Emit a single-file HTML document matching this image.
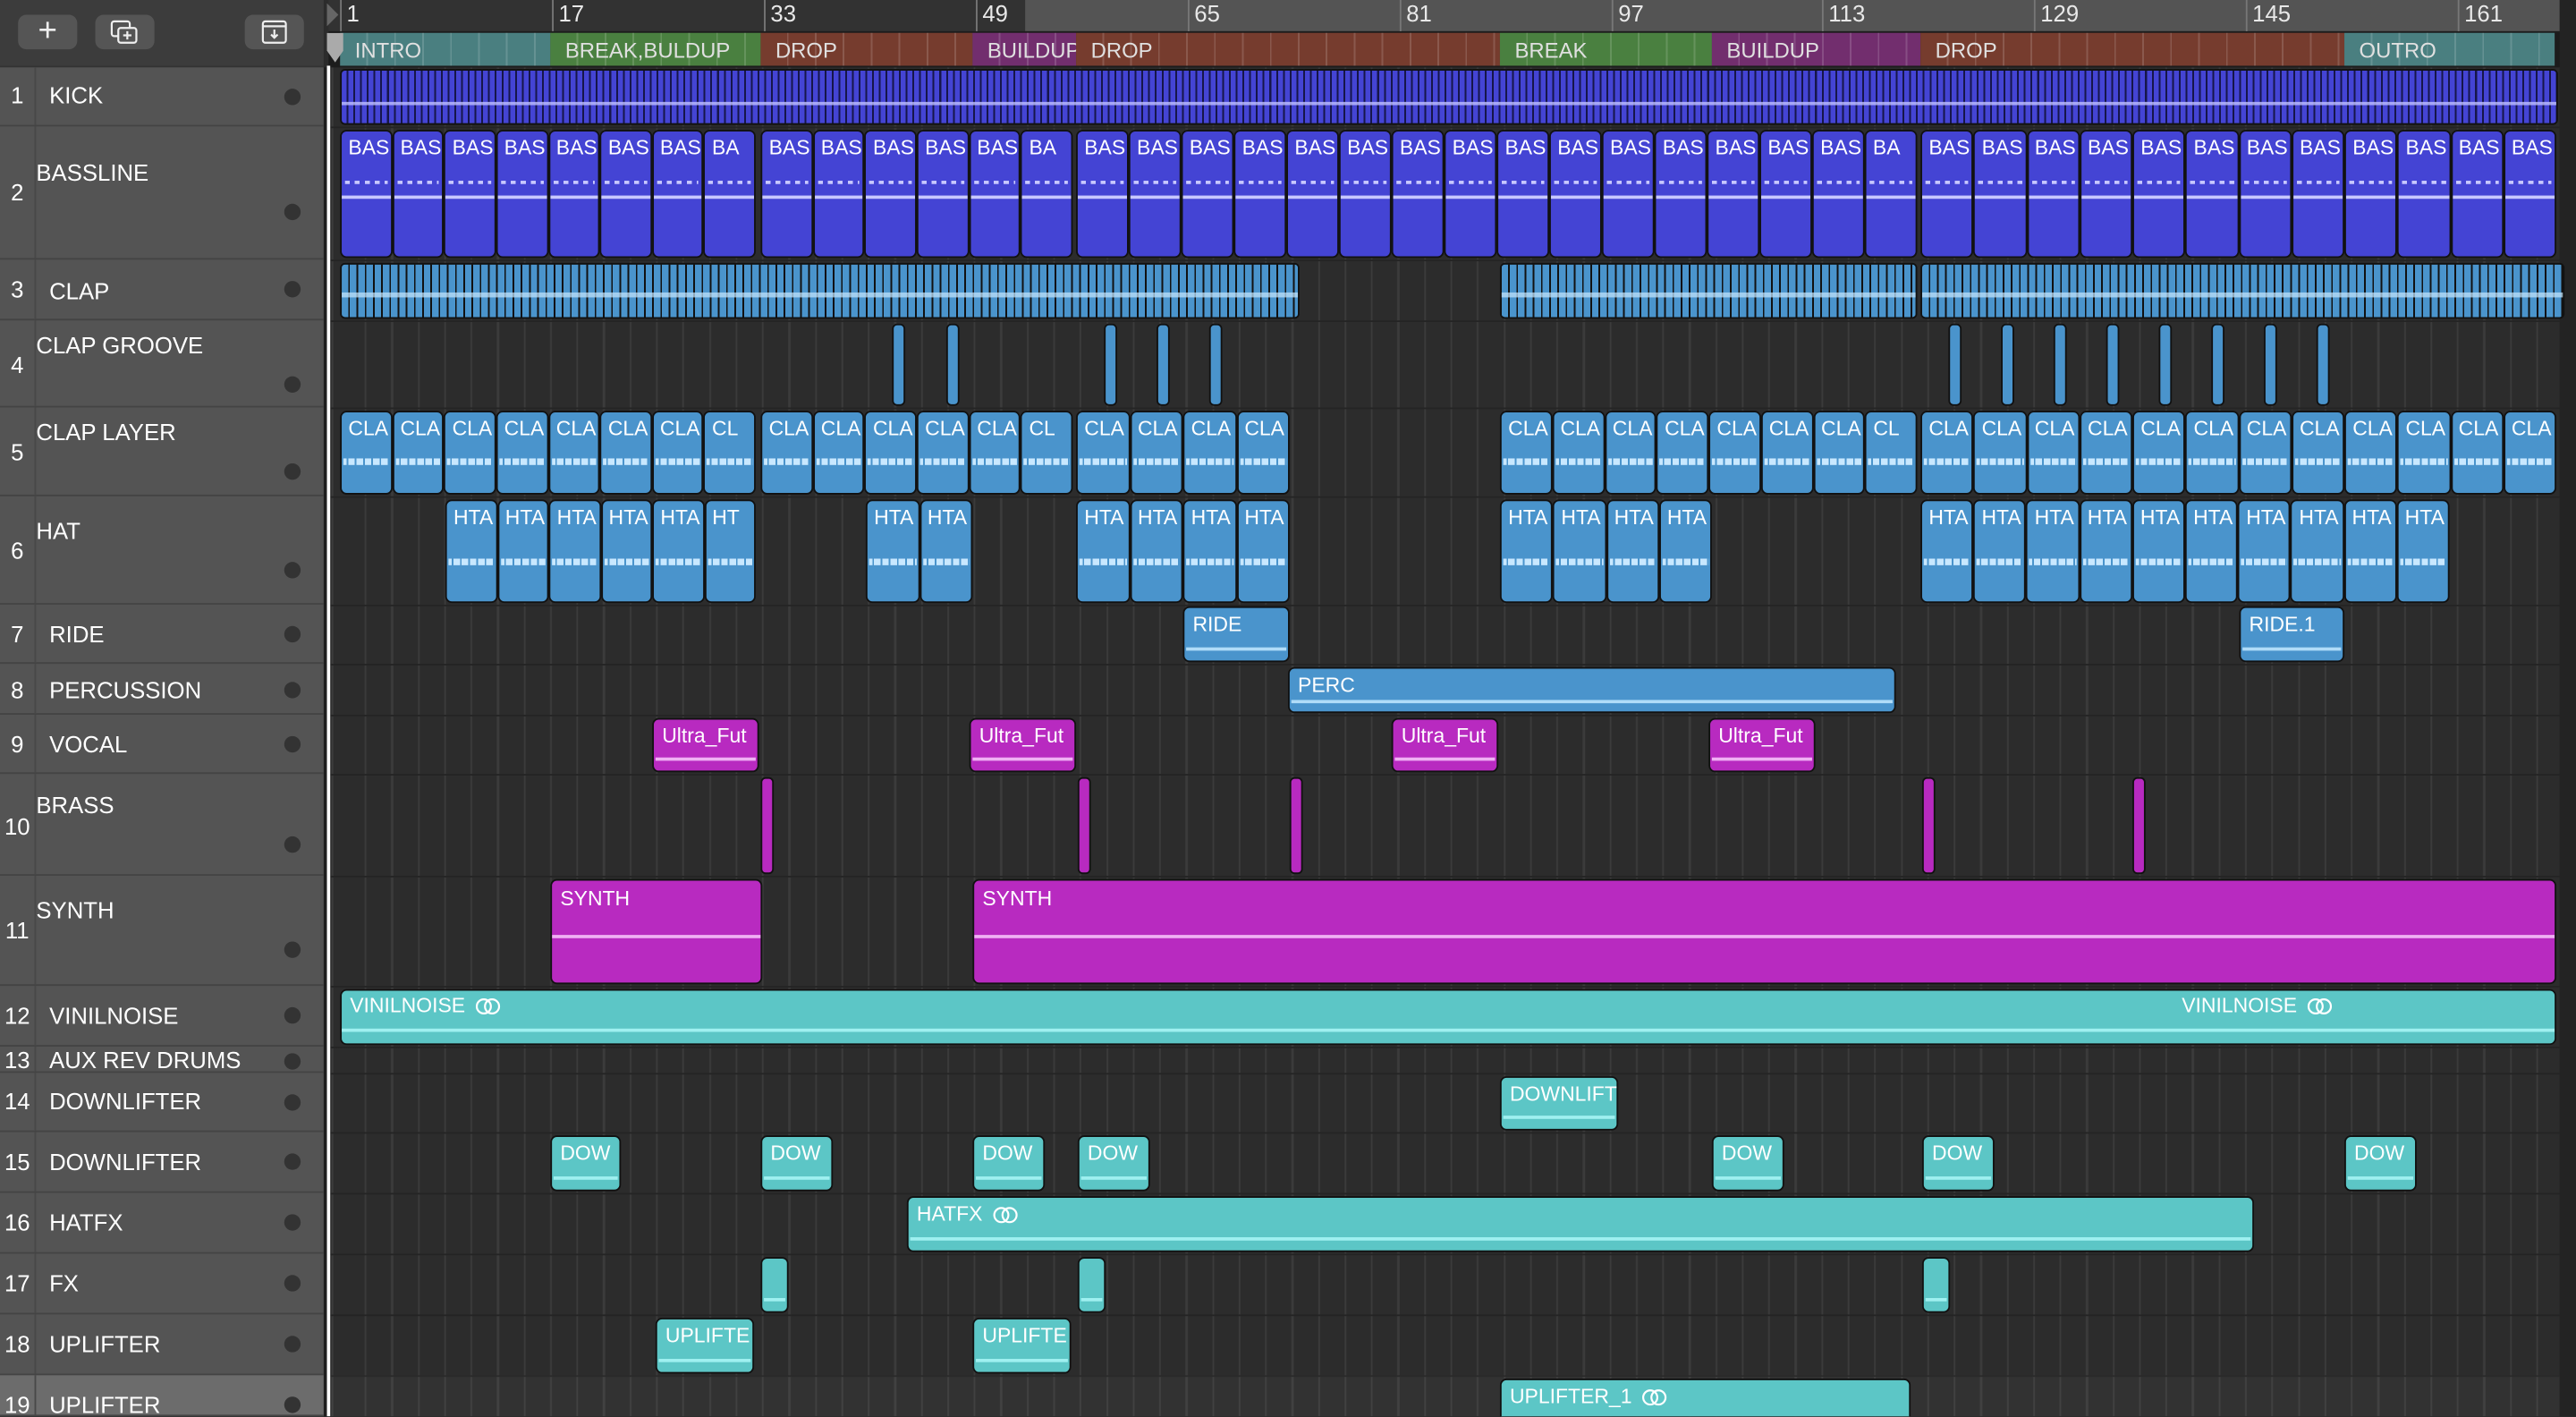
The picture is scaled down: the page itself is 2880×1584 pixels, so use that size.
<!DOCTYPE html>
<html><head><meta charset="utf-8"><style>
*{margin:0;padding:0;box-sizing:border-box}
html,body{width:2880px;height:1584px;overflow:hidden;background:#2c2c2c}
#w{position:absolute;left:0;top:0;width:1568px;height:862px;transform:scale(1.83674);transform-origin:0 0;font-family:"Liberation Sans",sans-serif;overflow:hidden}
.a{position:absolute}
.hd{position:absolute;left:0;width:197px;background:#545454;border-bottom:1px solid #444;color:#fff;font-size:14px}
.hd .n{position:absolute;left:0;width:22px;text-align:center;border-right:1px solid #484848;height:100%}
.hd .dot{position:absolute;left:173px;width:10px;height:10px;border-radius:50%;background:#333}
.r{position:absolute;border:1.2px solid #111;border-radius:4px;color:#fff;font-size:12.5px;padding:3px 0 0 5px;overflow:hidden;white-space:nowrap}
.f{position:absolute;display:flex}
.f>div{position:relative;flex:1;border:1.2px solid #111;border-radius:4px;color:#fff;font-size:12.5px;padding:3px 0 0 4px;overflow:hidden;white-space:nowrap}
.p{background:#4444d4}.b{background:#4a94cc}.m{background:#b82ac0}.t{background:#5cc6c6}
.ln::after{content:"";position:absolute;left:1px;right:1px;bottom:20%;height:2px;background:#9ff0f0}
.b.ln::after{background:#b0dcf8}.m.ln::after{background:#f0b0f4}
.bas::after{content:"";position:absolute;left:2px;right:2px;top:30px;height:2px;background:repeating-linear-gradient(90deg,#c8c8ff 0 3px,transparent 3px 6px)}
.bas::before{content:"";position:absolute;left:0;right:0;top:39px;height:2px;background:#c8c8ff}
.wv::after{content:"";position:absolute;left:1px;right:1px;top:58%;height:4px;background:repeating-linear-gradient(90deg,#c8e8ff 0 2px,#4a94cc 2px 3px,#c8e8ff 3px 5px)}
.mk{position:absolute;top:20px;height:20px;color:#e0e0e0;font-size:13px;padding:3px 0 0 9px;background-image:repeating-linear-gradient(90deg,transparent 0 16px,rgba(255,255,255,.15) 16px 17px)}
.rl{position:absolute;top:0;color:#e8e8e8;font-size:14px;border-left:1px solid #777;height:19px;padding-left:3px;line-height:16px}
.th{position:absolute;width:8px;border:1.2px solid #111;border-radius:3px}
.btn{position:absolute;top:9px;height:21px;width:36px;border-radius:5px;background:#555;color:#eee;text-align:center}
.lk{display:inline-block;vertical-align:-2px;margin-left:6px}
</style></head><body><div id="w">
<div class="a" style="left:200px;top:41px;width:1358px;height:821px;background:#2c2c2c;background-image:repeating-linear-gradient(90deg,transparent 0 15px,#3b3b3b 15px 16.12px);background-position:7px 0"></div>
<div class="a" style="left:1558px;top:0;width:10px;height:862px;background:#232323"></div>
<div class="a" style="left:200px;top:0;width:1358px;height:862px;background:
linear-gradient(#242424,#242424) 0 76.5px/100% 1.2px no-repeat,
linear-gradient(#242424,#242424) 0 157.5px/100% 1.2px no-repeat,
linear-gradient(#242424,#242424) 0 194.5px/100% 1.2px no-repeat,
linear-gradient(#242424,#242424) 0 247.5px/100% 1.2px no-repeat,
linear-gradient(#242424,#242424) 0 301.5px/100% 1.2px no-repeat,
linear-gradient(#242424,#242424) 0 367.5px/100% 1.2px no-repeat,
linear-gradient(#242424,#242424) 0 403.5px/100% 1.2px no-repeat,
linear-gradient(#242424,#242424) 0 434.5px/100% 1.2px no-repeat,
linear-gradient(#242424,#242424) 0 470.5px/100% 1.2px no-repeat,
linear-gradient(#242424,#242424) 0 532.5px/100% 1.2px no-repeat,
linear-gradient(#242424,#242424) 0 599.5px/100% 1.2px no-repeat,
linear-gradient(#242424,#242424) 0 636.5px/100% 1.2px no-repeat,
linear-gradient(#242424,#242424) 0 652.5px/100% 1.2px no-repeat,
linear-gradient(#242424,#242424) 0 688.5px/100% 1.2px no-repeat,
linear-gradient(#242424,#242424) 0 725.5px/100% 1.2px no-repeat,
linear-gradient(#242424,#242424) 0 762.5px/100% 1.2px no-repeat,
linear-gradient(#242424,#242424) 0 799.5px/100% 1.2px no-repeat,
linear-gradient(#242424,#242424) 0 836.5px/100% 1.2px no-repeat"></div>
<div class="a" style="left:200px;top:837px;width:1358px;height:25px;background:rgba(255,255,255,.03)"></div>

<div class="a" style="left:200px;top:0;width:424px;height:19px;background:#323232"></div>
<div class="a" style="left:624px;top:0;width:934px;height:19px;background:#545454"></div>
<div class="a" style="left:200px;top:19px;width:1358px;height:1px;background:#1c1c1c"></div>
<div class="rl" style="left:207px">1</div><div class="rl" style="left:336px">17</div><div class="rl" style="left:465px">33</div><div class="rl" style="left:594px">49</div><div class="rl" style="left:723px">65</div><div class="rl" style="left:852px">81</div><div class="rl" style="left:981px">97</div><div class="rl" style="left:1109px">113</div><div class="rl" style="left:1238px">129</div><div class="rl" style="left:1367px">145</div><div class="rl" style="left:1496px">161</div>
<div class="a" style="left:200px;top:20px;width:1358px;height:21px;background:#1c1c1c"></div>
<div class="mk" style="left:207px;width:128px;background-color:#4a7f80">INTRO</div>
<div class="mk" style="left:335px;width:128px;background-color:#4a8040">BREAK,BULDUP</div>
<div class="mk" style="left:463px;width:129px;background-color:#763c2e">DROP</div>
<div class="mk" style="left:592px;width:63px;background-color:#722e6e">BUILDUP</div>
<div class="mk" style="left:655px;width:258px;background-color:#763c2e">DROP</div>
<div class="mk" style="left:913px;width:129px;background-color:#4a8040">BREAK</div>
<div class="mk" style="left:1042px;width:127px;background-color:#722e6e">BUILDUP</div>
<div class="mk" style="left:1169px;width:258px;background-color:#763c2e">DROP</div>
<div class="mk" style="left:1427px;width:128px;background-color:#4a7f80">OUTRO</div>
<div class="a" style="left:199px;top:20px;width:10px;height:18px;background:#aaa;clip-path:polygon(0 0,100% 0,100% 60%,50% 100%,0 60%)"></div>
<div class="a" style="left:199px;top:2px;width:7px;height:14px;background:#666;clip-path:polygon(0 0,100% 50%,0 100%)"></div>

<div class="a" style="left:0;top:0;width:197px;height:41px;background:#3c3c3c;border-bottom:1px solid #333"></div>
<div class="btn" style="left:11px;font-size:20px;line-height:20px">+</div>
<div class="btn" style="left:58px"><svg width="20" height="16" viewBox="0 0 20 16" style="margin-top:3px"><rect x="2" y="1" width="11" height="9" rx="1.5" fill="none" stroke="#eee" stroke-width="1.2"/><rect x="6" y="5" width="11" height="9" rx="1.5" fill="#555" stroke="#eee" stroke-width="1.2"/><path d="M11.5 7v5M9 9.5h5" stroke="#eee" stroke-width="1.2"/></svg></div>
<div class="btn" style="left:149px"><svg width="20" height="16" viewBox="0 0 20 16" style="margin-top:3px"><rect x="3" y="1" width="14" height="13" rx="1.5" fill="none" stroke="#eee" stroke-width="1.2"/><path d="M3 4h14M10 6v5M8 9l2 2 2-2" fill="none" stroke="#eee" stroke-width="1.2"/></svg></div>
<div class="a" style="left:197px;top:41px;width:3px;height:821px;background:#1e1e1e"></div>
<div class="a" style="left:199px;top:40px;width:1.5px;height:822px;background:#fff"></div>

<div class="hd" style="top:41px;height:36px"><div class="n" style="line-height:34px">1</div><span class="a" style="left:30px;top:9px">KICK</span><div class="dot" style="top:13px"></div></div>
<div class="hd" style="top:77px;height:81px"><div class="n" style="padding-top:32px">2</div><span class="a" style="left:22px;top:20px">BASSLINE</span><div class="dot" style="top:47px"></div></div>
<div class="hd" style="top:158px;height:37px"><div class="n" style="line-height:36px">3</div><span class="a" style="left:30px;top:11px">CLAP</span><div class="dot" style="top:13px"></div></div>
<div class="hd" style="top:195px;height:53px"><div class="n" style="padding-top:19px">4</div><span class="a" style="left:22px;top:7px">CLAP GROOVE</span><div class="dot" style="top:34px"></div></div>
<div class="hd" style="top:248px;height:54px"><div class="n" style="padding-top:19px">5</div><span class="a" style="left:22px;top:7px">CLAP LAYER</span><div class="dot" style="top:34px"></div></div>
<div class="hd" style="top:302px;height:66px"><div class="n" style="padding-top:25px">6</div><span class="a" style="left:22px;top:13px">HAT</span><div class="dot" style="top:40px"></div></div>
<div class="hd" style="top:368px;height:36px"><div class="n" style="line-height:36px">7</div><span class="a" style="left:30px;top:10px">RIDE</span><div class="dot" style="top:13px"></div></div>
<div class="hd" style="top:404px;height:31px"><div class="n" style="line-height:32px">8</div><span class="a" style="left:30px;top:8px">PERCUSSION</span><div class="dot" style="top:11px"></div></div>
<div class="hd" style="top:435px;height:36px"><div class="n" style="line-height:36px">9</div><span class="a" style="left:30px;top:10px">VOCAL</span><div class="dot" style="top:13px"></div></div>
<div class="hd" style="top:471px;height:62px"><div class="n" style="padding-top:24px">10</div><span class="a" style="left:22px;top:11px">BRASS</span><div class="dot" style="top:38px"></div></div>
<div class="hd" style="top:533px;height:67px"><div class="n" style="padding-top:25px">11</div><span class="a" style="left:22px;top:13px">SYNTH</span><div class="dot" style="top:40px"></div></div>
<div class="hd" style="top:600px;height:37px"><div class="n" style="line-height:36px">12</div><span class="a" style="left:30px;top:10px">VINILNOISE</span><div class="dot" style="top:13px"></div></div>
<div class="hd" style="top:637px;height:16px"><div class="n" style="line-height:17px">13</div><span class="a" style="left:30px;top:0px">AUX REV DRUMS</span><div class="dot" style="top:4px"></div></div>
<div class="hd" style="top:653px;height:36px"><div class="n" style="line-height:34px">14</div><span class="a" style="left:30px;top:9px">DOWNLIFTER</span><div class="dot" style="top:13px"></div></div>
<div class="hd" style="top:689px;height:37px"><div class="n" style="line-height:37px">15</div><span class="a" style="left:30px;top:10px">DOWNLIFTER</span><div class="dot" style="top:13px"></div></div>
<div class="hd" style="top:726px;height:37px"><div class="n" style="line-height:37px">16</div><span class="a" style="left:30px;top:10px">HATFX</span><div class="dot" style="top:13px"></div></div>
<div class="hd" style="top:763px;height:37px"><div class="n" style="line-height:37px">17</div><span class="a" style="left:30px;top:10px">FX</span><div class="dot" style="top:13px"></div></div>
<div class="hd" style="top:800px;height:37px"><div class="n" style="line-height:37px">18</div><span class="a" style="left:30px;top:10px">UPLIFTER</span><div class="dot" style="top:13px"></div></div>
<div class="hd" style="top:837px;height:25px;background:#6c6c6c"><div class="n" style="line-height:37px">19</div><span class="a" style="left:30px;top:10px">UPLIFTER</span><div class="dot" style="top:13px"></div></div>

<div class="a" style="left:207px;top:42px;width:1350px;height:34px;border:1.2px solid #111;border-radius:3px;background:repeating-linear-gradient(90deg,#4444d4 0 3px,#16164a 3px 4.1px)"></div>
<div class="a" style="left:208px;top:62px;width:1348px;height:2px;background:#c0c0ff;opacity:.8"></div>

<div class="f" style="left:207px;top:79px;width:253px;height:78px"><div class="p bas">BAS</div><div class="p bas">BAS</div><div class="p bas">BAS</div><div class="p bas">BAS</div><div class="p bas">BAS</div><div class="p bas">BAS</div><div class="p bas">BAS</div><div class="p bas">BA</div></div>
<div class="f" style="left:463px;top:79px;width:190px;height:78px"><div class="p bas">BAS</div><div class="p bas">BAS</div><div class="p bas">BAS</div><div class="p bas">BAS</div><div class="p bas">BAS</div><div class="p bas">BA</div></div>
<div class="f" style="left:655px;top:79px;width:512px;height:78px"><div class="p bas">BAS</div><div class="p bas">BAS</div><div class="p bas">BAS</div><div class="p bas">BAS</div><div class="p bas">BAS</div><div class="p bas">BAS</div><div class="p bas">BAS</div><div class="p bas">BAS</div><div class="p bas">BAS</div><div class="p bas">BAS</div><div class="p bas">BAS</div><div class="p bas">BAS</div><div class="p bas">BAS</div><div class="p bas">BAS</div><div class="p bas">BAS</div><div class="p bas">BA</div></div>
<div class="f" style="left:1169px;top:79px;width:387px;height:78px"><div class="p bas">BAS</div><div class="p bas">BAS</div><div class="p bas">BAS</div><div class="p bas">BAS</div><div class="p bas">BAS</div><div class="p bas">BAS</div><div class="p bas">BAS</div><div class="p bas">BAS</div><div class="p bas">BAS</div><div class="p bas">BAS</div><div class="p bas">BAS</div><div class="p bas">BAS</div></div>

<div class="a" style="left:207px;top:160px;width:584px;height:34px;border:1.2px solid #111;border-radius:3px;background:repeating-linear-gradient(90deg,#4a94cc 0 4px,#111 4px 5px)"></div>
<div class="a" style="left:913px;top:160px;width:254px;height:34px;border:1.2px solid #111;border-radius:3px;background:repeating-linear-gradient(90deg,#4a94cc 0 4px,#111 4px 5px)"></div>
<div class="a" style="left:1169px;top:160px;width:392px;height:34px;border:1.2px solid #111;border-radius:3px;background:repeating-linear-gradient(90deg,#4a94cc 0 4px,#111 4px 5px)"></div>
<div class="a" style="left:208px;top:178px;width:582px;height:3px;background:#c8e8ff;opacity:.7"></div>
<div class="a" style="left:914px;top:178px;width:252px;height:3px;background:#c8e8ff;opacity:.7"></div>
<div class="a" style="left:1170px;top:178px;width:390px;height:3px;background:#c8e8ff;opacity:.7"></div>

<div class="th b" style="left:543px;top:197px;height:50px"></div><div class="th b" style="left:576px;top:197px;height:50px"></div>
<div class="th b" style="left:672px;top:197px;height:50px"></div><div class="th b" style="left:704px;top:197px;height:50px"></div><div class="th b" style="left:736px;top:197px;height:50px"></div>
<div class="th b" style="left:1186px;top:197px;height:50px"></div><div class="th b" style="left:1218px;top:197px;height:50px"></div><div class="th b" style="left:1250px;top:197px;height:50px"></div><div class="th b" style="left:1282px;top:197px;height:50px"></div><div class="th b" style="left:1314px;top:197px;height:50px"></div><div class="th b" style="left:1346px;top:197px;height:50px"></div><div class="th b" style="left:1378px;top:197px;height:50px"></div><div class="th b" style="left:1410px;top:197px;height:50px"></div>

<div class="f" style="left:207px;top:250px;width:253px;height:51px"><div class="b wv">CLA</div><div class="b wv">CLA</div><div class="b wv">CLA</div><div class="b wv">CLA</div><div class="b wv">CLA</div><div class="b wv">CLA</div><div class="b wv">CLA</div><div class="b wv">CL</div></div>
<div class="f" style="left:463px;top:250px;width:190px;height:51px"><div class="b wv">CLA</div><div class="b wv">CLA</div><div class="b wv">CLA</div><div class="b wv">CLA</div><div class="b wv">CLA</div><div class="b wv">CL</div></div>
<div class="f" style="left:655px;top:250px;width:130px;height:51px"><div class="b wv">CLA</div><div class="b wv">CLA</div><div class="b wv">CLA</div><div class="b wv">CLA</div></div>
<div class="f" style="left:913px;top:250px;width:254px;height:51px"><div class="b wv">CLA</div><div class="b wv">CLA</div><div class="b wv">CLA</div><div class="b wv">CLA</div><div class="b wv">CLA</div><div class="b wv">CLA</div><div class="b wv">CLA</div><div class="b wv">CL</div></div>
<div class="f" style="left:1169px;top:250px;width:387px;height:51px"><div class="b wv">CLA</div><div class="b wv">CLA</div><div class="b wv">CLA</div><div class="b wv">CLA</div><div class="b wv">CLA</div><div class="b wv">CLA</div><div class="b wv">CLA</div><div class="b wv">CLA</div><div class="b wv">CLA</div><div class="b wv">CLA</div><div class="b wv">CLA</div><div class="b wv">CLA</div></div>

<div class="f" style="left:271px;top:304px;width:189px;height:63px"><div class="b wv">HTA</div><div class="b wv">HTA</div><div class="b wv">HTA</div><div class="b wv">HTA</div><div class="b wv">HTA</div><div class="b wv">HT</div></div>
<div class="f" style="left:527px;top:304px;width:65px;height:63px"><div class="b wv">HTA</div><div class="b wv">HTA</div></div>
<div class="f" style="left:655px;top:304px;width:130px;height:63px"><div class="b wv">HTA</div><div class="b wv">HTA</div><div class="b wv">HTA</div><div class="b wv">HTA</div></div>
<div class="f" style="left:913px;top:304px;width:129px;height:63px"><div class="b wv">HTA</div><div class="b wv">HTA</div><div class="b wv">HTA</div><div class="b wv">HTA</div></div>
<div class="f" style="left:1169px;top:304px;width:322px;height:63px"><div class="b wv">HTA</div><div class="b wv">HTA</div><div class="b wv">HTA</div><div class="b wv">HTA</div><div class="b wv">HTA</div><div class="b wv">HTA</div><div class="b wv">HTA</div><div class="b wv">HTA</div><div class="b wv">HTA</div><div class="b wv">HTA</div></div>

<div class="r b ln" style="left:720px;top:369px;width:65px;height:34px">RIDE</div>
<div class="r b ln" style="left:1363px;top:369px;width:64px;height:34px">RIDE.1</div>
<div class="r b ln" style="left:784px;top:406px;width:370px;height:28px;padding-top:3px">PERC</div>

<div class="r m ln" style="left:397px;top:437px;width:65px;height:33px">Ultra_Fut</div>
<div class="r m ln" style="left:590px;top:437px;width:65px;height:33px">Ultra_Fut</div>
<div class="r m ln" style="left:847px;top:437px;width:65px;height:33px">Ultra_Fut</div>
<div class="r m ln" style="left:1040px;top:437px;width:65px;height:33px">Ultra_Fut</div>

<div class="th m" style="left:463px;top:473px;height:59px"></div><div class="th m" style="left:656px;top:473px;height:59px"></div><div class="th m" style="left:785px;top:473px;height:59px"></div><div class="th m" style="left:1170px;top:473px;height:59px"></div><div class="th m" style="left:1298px;top:473px;height:59px"></div>

<div class="r m" style="left:335px;top:535px;width:129px;height:64px;padding-top:4px">SYNTH<div class="a" style="left:0;right:0;top:33px;height:2px;background:#f0b0f4"></div></div>
<div class="r m" style="left:592px;top:535px;width:964px;height:64px;padding-top:4px">SYNTH<div class="a" style="left:0;right:0;top:33px;height:2px;background:#f0b0f4"></div></div>

<div class="r t" style="left:207px;top:602px;width:1349px;height:34px;padding-top:2px">VINILNOISE<svg class="lk" width="16" height="11" viewBox="0 0 16 11"><circle cx="5.5" cy="5.5" r="4.3" fill="none" stroke="#fff" stroke-width="1.2"/><circle cx="10.5" cy="5.5" r="4.3" fill="none" stroke="#fff" stroke-width="1.2"/></svg><span class="a" style="left:1120px;top:2px">VINILNOISE<svg class="lk" width="16" height="11" viewBox="0 0 16 11"><circle cx="5.5" cy="5.5" r="4.3" fill="none" stroke="#fff" stroke-width="1.2"/><circle cx="10.5" cy="5.5" r="4.3" fill="none" stroke="#fff" stroke-width="1.2"/></svg></span><div class="a" style="left:0;right:0;top:23px;height:2px;background:#9ff0f0"></div></div>

<div class="r t ln" style="left:913px;top:655px;width:72px;height:33px">DOWNLIFT</div>
<div class="r t ln" style="left:335px;top:691px;width:43px;height:34px">DOW</div>
<div class="r t ln" style="left:463px;top:691px;width:44px;height:34px">DOW</div>
<div class="r t ln" style="left:592px;top:691px;width:44px;height:34px">DOW</div>
<div class="r t ln" style="left:656px;top:691px;width:44px;height:34px">DOW</div>
<div class="r t ln" style="left:1042px;top:691px;width:44px;height:34px">DOW</div>
<div class="r t ln" style="left:1170px;top:691px;width:44px;height:34px">DOW</div>
<div class="r t ln" style="left:1427px;top:691px;width:44px;height:34px">DOW</div>
<div class="r t ln" style="left:552px;top:728px;width:820px;height:34px">HATFX<svg class="lk" width="16" height="11" viewBox="0 0 16 11"><circle cx="5.5" cy="5.5" r="4.3" fill="none" stroke="#fff" stroke-width="1.2"/><circle cx="10.5" cy="5.5" r="4.3" fill="none" stroke="#fff" stroke-width="1.2"/></svg></div>
<div class="r t ln" style="left:463px;top:765px;width:17px;height:34px"></div>
<div class="r t ln" style="left:656px;top:765px;width:17px;height:34px"></div>
<div class="r t ln" style="left:1170px;top:765px;width:17px;height:34px"></div>
<div class="r t ln" style="left:399px;top:802px;width:60px;height:34px">UPLIFTE</div>
<div class="r t ln" style="left:592px;top:802px;width:60px;height:34px">UPLIFTE</div>
<div class="r t" style="left:913px;top:839px;width:250px;height:30px">UPLIFTER_1<svg class="lk" width="16" height="11" viewBox="0 0 16 11"><circle cx="5.5" cy="5.5" r="4.3" fill="none" stroke="#fff" stroke-width="1.2"/><circle cx="10.5" cy="5.5" r="4.3" fill="none" stroke="#fff" stroke-width="1.2"/></svg></div>
</div></body></html>
